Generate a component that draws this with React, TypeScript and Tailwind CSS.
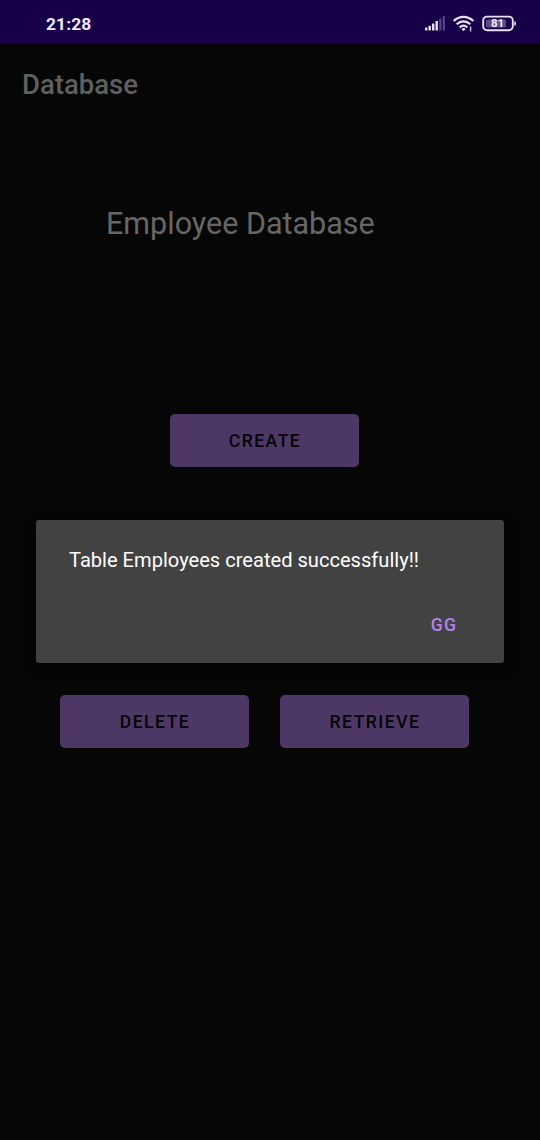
import type { ReactNode } from "react";

function ActionButton({ children }: { children: ReactNode }) {
  return (
    <button className="flex h-[53px] w-[189px] items-center justify-center rounded-[5px] bg-[#4d3764] pt-[2px] pl-px text-[17.6px] leading-none font-medium tracking-[1.45px] text-[#050208]">
      {children}
    </button>
  );
}

function StatusIcons() {
  return (
    <svg width="94" height="20" viewBox="0 0 94 20" fill="none">
      <g fill="#e6e0f5">
        <rect x="0" y="13.5" width="2.4" height="3" rx="0.6" />
        <rect x="3.5" y="11.8" width="2.4" height="4.7" rx="0.6" />
        <rect x="7" y="9.5" width="2.4" height="7" rx="0.6" />
        <rect x="10.5" y="7" width="2.4" height="9.5" rx="0.6" />
      </g>
      <g fill="#55428a">
        <rect x="14.2" y="4.5" width="2.2" height="12" rx="0.6" />
        <rect x="17.7" y="2" width="2.2" height="14.5" rx="0.6" />
      </g>
      <g stroke="#e6e0f5" strokeWidth="2.2">
        <path d="M28.6 7C34.3 1.4 42.7 1.4 48.4 7" />
        <path d="M31.7 10.3C35.7 6.4 41.3 6.4 45.3 10.3" />
        <path d="M34.7 13.4C37 11.2 40 11.2 42.3 13.4" />
      </g>
      <path d="M36.4 15Q38.5 13.2 40.6 15L38.5 17.2Z" fill="#e6e0f5" />
      <path d="M45.6 12.5v5" stroke="#c9bfe2" strokeWidth="1.4" />
      <rect x="58.2" y="2.6" width="29.6" height="13.6" rx="4" stroke="#e6e0f5" strokeWidth="1.9" />
      <rect x="61" y="5.4" width="20" height="8" rx="1.5" fill="#5b4989" />
      <path d="M89.3 7.4h.6q1.1 0 1.1 1v2q0 1-1.1 1h-.6Z" fill="#e6e0f5" />
      <text x="72.6" y="13.4" textAnchor="middle" fill="#f3effb" fontSize="11.5" fontWeight="700">81</text>
    </svg>
  );
}

export default function App() {
  return (
    <div className="relative flex h-[1140px] w-[540px] flex-col overflow-hidden bg-[#060606] font-['Roboto',sans-serif]">
      <header className="flex h-[44px] shrink-0 items-center justify-between bg-[#180048] pt-[4px] pr-[21px] pl-[46px]">
        <span className="pt-[2px] text-[17.4px] leading-none font-bold tracking-[0.1px] text-[#efeafa]">21:28</span>
        <StatusIcons />
      </header>
      <div className="flex h-[80px] shrink-0 items-center pt-[2px] pl-[22px]">
        <h1 className="text-[27.5px] leading-none font-medium text-[#5f5f5f]">Database</h1>
      </div>
      <main className="flex flex-col">
        <h2 className="mt-[80px] ml-[106px] h-[40px] text-[30.5px] leading-[40px] whitespace-nowrap text-[#666666]">Employee Database</h2>
        <div className="mt-[170px] ml-[170px] flex">
          <ActionButton>CREATE</ActionButton>
        </div>
        <div className="mt-[228px] ml-[60px] flex gap-[31px]">
          <ActionButton>DELETE</ActionButton>
          <ActionButton>RETRIEVE</ActionButton>
        </div>
      </main>
      <div role="dialog" className="absolute top-[520px] left-[36px] flex h-[143px] w-[468px] flex-col rounded-[3px] bg-[#424242] pt-[26px] pl-[33px] shadow-[0_5px_12px_#00000080]">
        <p className="text-[20.1px] leading-[28px] whitespace-nowrap text-white">Table Employees created successfully!!</p>
        <button className="mt-[37px] mr-[46.5px] self-end text-[17.6px] leading-[28px] font-medium tracking-[1.4px] text-[#b283eb]">GG</button>
      </div>
    </div>
  );
}
